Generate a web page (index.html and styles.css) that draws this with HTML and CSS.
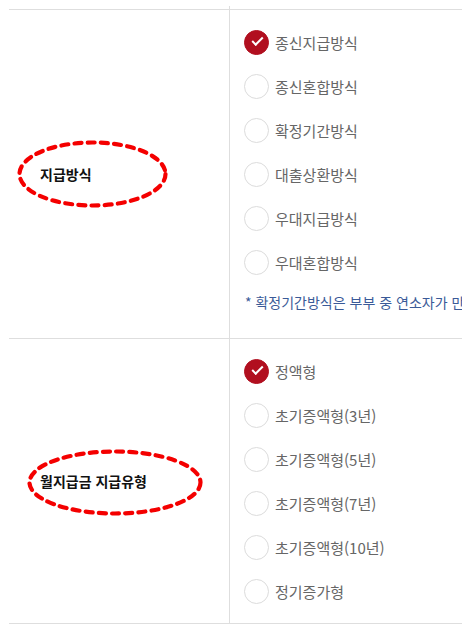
FILE: index.html
```html
<!DOCTYPE html>
<html lang="ko">

<head>
    <meta charset="UTF-8">
    <meta name="viewport" content="width=device-width, initial-scale=1.0">
    <title>연금 지급방식</title>

    <link rel="stylesheet" href="styles.css">
</head>

<body>
    <div class="form-table">
        <div class="stub"></div>

        <div class="row">
            <div class="head">
                <span class="label">지급방식
                    <svg class="circle circle-1" width="151" height="68" viewBox="0 0 151 68">
                        <ellipse cx="75.5" cy="34" rx="73" ry="31.5" fill="none" stroke="#f40000" stroke-width="4.2" stroke-dasharray="7 6.2" stroke-linecap="round"/>
                    </svg>
                </span>
            </div>
            <div class="cell">
                <label class="opt checked"><span class="radio"></span>종신지급방식</label>
                <label class="opt"><span class="radio"></span>종신혼합방식</label>
                <label class="opt"><span class="radio"></span>확정기간방식</label>
                <label class="opt"><span class="radio"></span>대출상환방식</label>
                <label class="opt"><span class="radio"></span>우대지급방식</label>
                <label class="opt"><span class="radio"></span>우대혼합방식</label>
                <p class="note">* 확정기간방식은 부부 중 연소자가 만 55세 이상인 경우에만 선택할 수 있습니다.</p>
            </div>
        </div>

        <div class="row">
            <div class="head">
                <span class="label">월지급금 지급유형
                    <svg class="circle circle-2" width="176" height="67" viewBox="0 0 176 67">
                        <ellipse cx="88" cy="33.5" rx="85.5" ry="31" fill="none" stroke="#f40000" stroke-width="4.2" stroke-dasharray="7 6.2" stroke-linecap="round"/>
                    </svg>
                </span>
            </div>
            <div class="cell">
                <label class="opt checked"><span class="radio"></span>정액형</label>
                <label class="opt"><span class="radio"></span>초기증액형(3년)</label>
                <label class="opt"><span class="radio"></span>초기증액형(5년)</label>
                <label class="opt"><span class="radio"></span>초기증액형(7년)</label>
                <label class="opt"><span class="radio"></span>초기증액형(10년)</label>
                <label class="opt"><span class="radio"></span>정기증가형</label>
            </div>
        </div>
    </div>
</body>

</html>
```

FILE: styles.css
```css
body {
    margin: 0;
    background-color: #fff;
    font-family: "Noto Sans CJK KR", "Noto Sans", sans-serif;
}

.form-table {
    width: 453px;
    margin: 6px 0 0 9px;
    overflow: hidden;
}

.stub {
    height: 3px;
    margin-left: 220px;
    border-left: 1px solid #dedede;
}

.row {
    display: grid;
    grid-template-columns: 220px 1fr;
    border-top: 1px solid #dedede;
}

.row:last-child {
    border-bottom: 1px solid #dedede;
}

.head {
    display: flex;
    align-items: center;
    padding-left: 31px;
}

.label {
    position: relative;
    font-size: 14px;
    font-weight: bold;
    color: #111;
    line-height: 20px;
}

.circle {
    position: absolute;
    top: 50%;
}

.circle-1 {
    left: -23px;
    margin-top: -34px;
}

.circle-2 {
    left: -13px;
    margin-top: -32px;
}

.cell {
    border-left: 1px solid #dedede;
    padding: 10px 0 10px 14px;
    min-width: 0;
}

.opt {
    display: flex;
    align-items: center;
    height: 44px;
    font-size: 15px;
    color: #666;
}

.radio {
    width: 23px;
    height: 23px;
    border: 1px solid #dcdcdc;
    border-radius: 50%;
    margin-right: 6px;
    flex-shrink: 0;
    position: relative;
}

.checked .radio {
    background-color: #b10f1f;
    border-color: #b10f1f;
}

.checked .radio::after {
    content: "";
    position: absolute;
    left: 7px;
    top: 6px;
    width: 9px;
    height: 4px;
    border-left: 2px solid #fff;
    border-bottom: 2px solid #fff;
    transform: rotate(-45deg);
}

.note {
    margin: 8px 0 16px 1px;
    font-size: 14px;
    line-height: 20px;
    color: #3a5a98;
    white-space: nowrap;
}
```
